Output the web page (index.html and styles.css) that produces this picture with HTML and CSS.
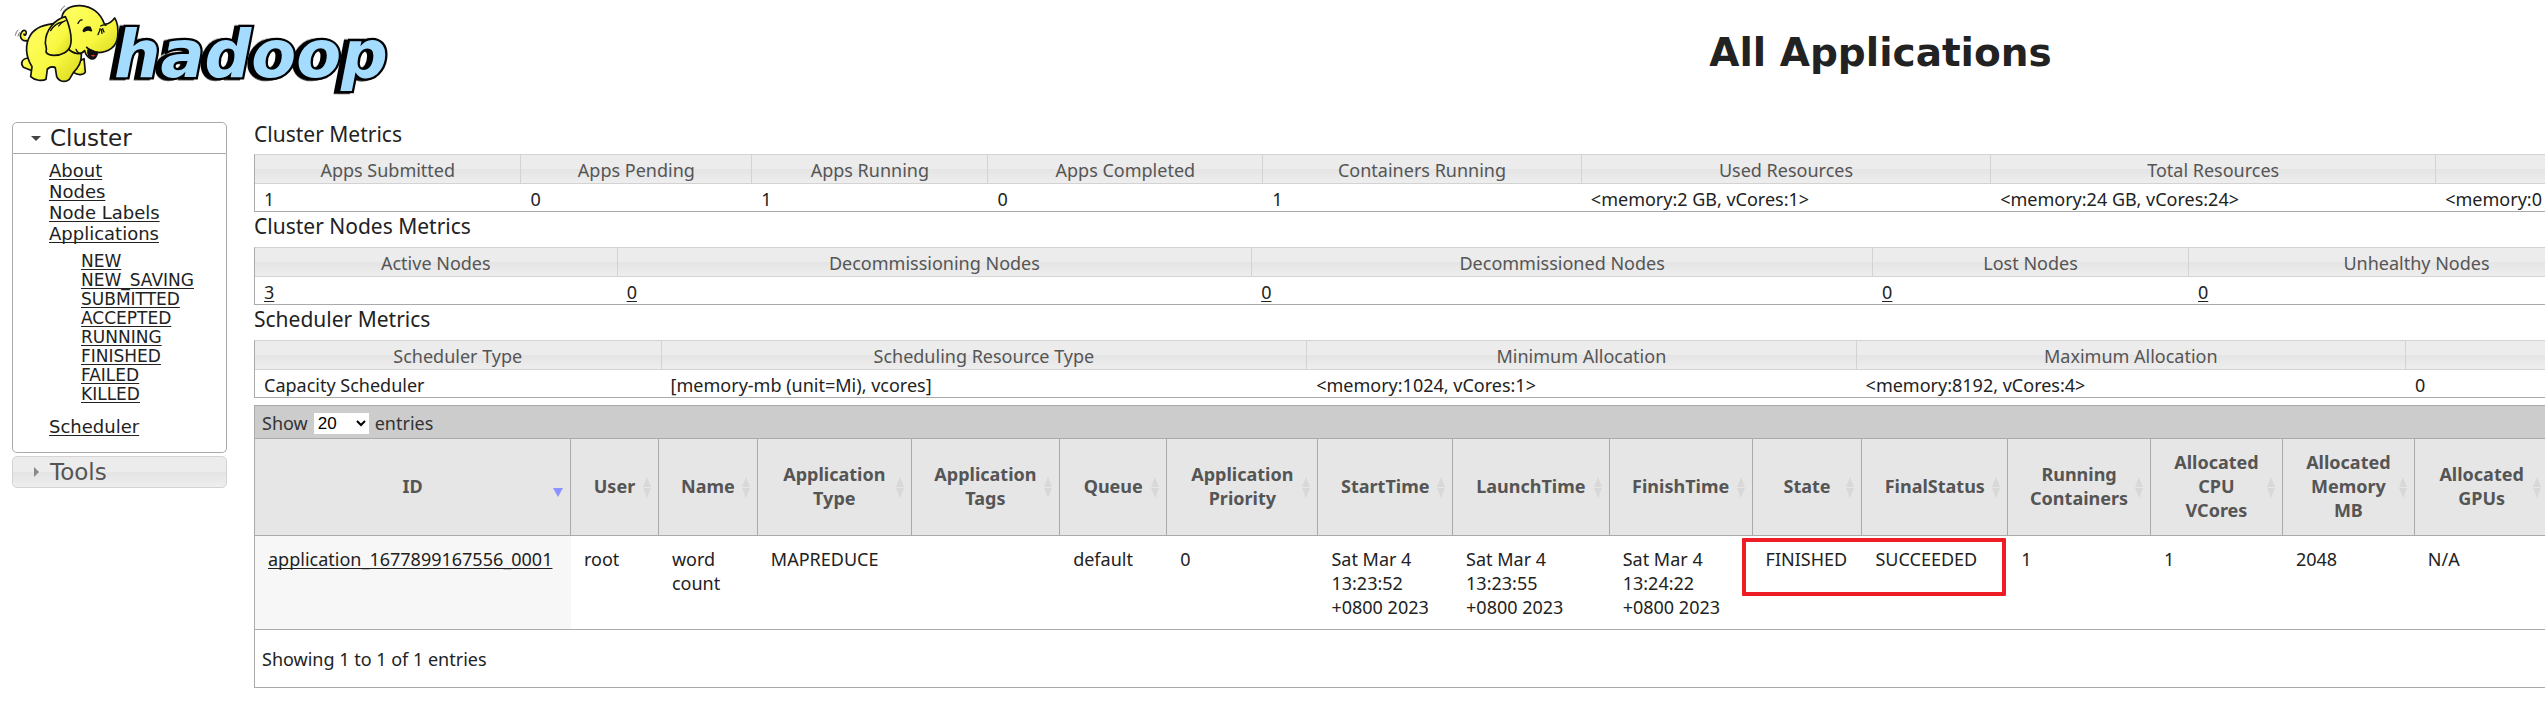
FILE: index.html
```html
<!DOCTYPE html>
<html lang="en">
<head>
<meta charset="utf-8">
<title>All Applications</title>
<link rel="stylesheet" href="styles.css">
</head>
<body>
<header class="header">
  <a class="logo" href="#">
    <svg class="logo-art" viewBox="0 0 1200 330" role="img" aria-label="hadoop">
      <defs>
        <linearGradient id="skin" x1="0" y1="0" x2="1" y2="1">
          <stop offset="0" stop-color="#ffff66"/><stop offset="0.6" stop-color="#f8f840"/><stop offset="1" stop-color="#d6d21c"/>
        </linearGradient>
      </defs>
      <text class="word" x="342" y="230">hadoop</text>
      <g fill="url(#skin)" stroke="#111" stroke-width="5" stroke-linejoin="round" stroke-linecap="round">
        <path d="M82 122C68 126 56 112 64 98C70 86 82 92 78 102C76 108 72 106 72 102"/>
        <path d="M84 174C66 176 60 190 70 202L96 212L110 190Z"/>
        <path d="M224 190L222 218C232 226 252 226 256 216L252 176Z"/>
        <path d="M170 70C140 72 108 80 92 104C74 132 76 168 96 200L92 230C104 242 128 244 138 238L142 208C150 200 158 198 166 204L170 230C178 246 196 248 208 238L220 218C234 204 244 188 244 168L244 150L180 60Z"/>
        <path d="M186 50C190 30 210 16 240 17C276 18 302 40 313 72C326 74 338 62 344 54C352 66 355 90 353 110C350 140 326 158 292 158C290 170 284 180 272 176C262 172 256 160 254 152C240 168 222 160 208 150Z"/>
        <path d="M196 50C166 58 136 88 136 130C138 140 142 146 138 156C146 170 176 168 194 158C218 146 216 110 206 76C202 62 200 56 196 50Z"/>
        <path d="M292 156C278 156 268 150 260 142M264 150C262 162 268 176 278 174C284 172 290 166 291 158Z" fill="#111"/>
        <path d="M272 166Q280 162 286 166Q280 174 272 166Z" fill="#d33" stroke="none"/>
        <path d="M152 92Q164 70 188 66M176 78Q184 66 196 62M234 70Q240 58 246 60M302 78Q312 72 318 76M294 104Q300 92 300 86M306 100L304 88M312 96L308 86M244 162Q232 160 228 148M142 206Q150 198 166 202" fill="none" stroke-width="4"/>
        <path d="M250 92Q256 78 270 82L274 92Q264 86 252 94Z" fill="#111"/>
        <path d="M182 32Q186 22 194 18M192 32Q196 26 202 24M46 106Q48 94 54 90M54 108L58 98" fill="none" stroke="#777" stroke-width="3"/>
      </g>
    </svg>
  </a>
  <h1 class="title">All Applications</h1>
</header>

<div class="page">
  <nav class="sidebar">
    <button class="side-head side-head-open" type="button"><span class="caret caret-down"></span>Cluster</button>
    <div class="side-body">
      <ul class="links">
        <li><a href="#">About</a></li>
        <li><a href="#">Nodes</a></li>
        <li><a href="#">Node Labels</a></li>
        <li><a href="#">Applications</a>
          <ul class="sublinks">
            <li><a href="#">NEW</a></li>
            <li><a href="#">NEW_SAVING</a></li>
            <li><a href="#">SUBMITTED</a></li>
            <li><a href="#">ACCEPTED</a></li>
            <li><a href="#">RUNNING</a></li>
            <li><a href="#">FINISHED</a></li>
            <li><a href="#">FAILED</a></li>
            <li><a href="#">KILLED</a></li>
          </ul>
        </li>
        <li><a href="#">Scheduler</a></li>
      </ul>
    </div>
    <button class="side-head side-head-closed" type="button"><span class="caret caret-right"></span>Tools</button>
  </nav>

  <main class="content">
    <h2 class="section section-first">Cluster Metrics</h2>
    <table class="metrics cluster">
      <thead><tr><th>Apps Submitted</th><th>Apps Pending</th><th>Apps Running</th><th>Apps Completed</th><th>Containers Running</th><th>Used Resources</th><th>Total Resources</th><th></th></tr></thead>
      <tbody><tr><td>1</td><td>0</td><td>1</td><td>0</td><td>1</td><td>&lt;memory:2 GB, vCores:1&gt;</td><td>&lt;memory:24 GB, vCores:24&gt;</td><td>&lt;memory:0</td></tr></tbody>
    </table>
    <h2 class="section">Cluster Nodes Metrics</h2>
    <table class="metrics nodes">
      <thead><tr><th>Active Nodes</th><th>Decommissioning Nodes</th><th>Decommissioned Nodes</th><th>Lost Nodes</th><th>Unhealthy Nodes</th><th></th></tr></thead>
      <tbody><tr><td><a href="#">3</a></td><td><a href="#">0</a></td><td><a href="#">0</a></td><td><a href="#">0</a></td><td><a href="#">0</a></td><td></td></tr></tbody>
    </table>
    <h2 class="section">Scheduler Metrics</h2>
    <table class="metrics scheduler">
      <thead><tr><th>Scheduler Type</th><th>Scheduling Resource Type</th><th>Minimum Allocation</th><th>Maximum Allocation</th><th></th></tr></thead>
      <tbody><tr><td>Capacity Scheduler</td><td>[memory-mb (unit=Mi), vcores]</td><td>&lt;memory:1024, vCores:1&gt;</td><td>&lt;memory:8192, vCores:4&gt;</td><td>0</td></tr></tbody>
    </table>

    <section class="apps">
      <div class="toolbar">
        <label for="length">Show</label>
        <select id="length" class="length"><option>20</option><option>40</option><option>60</option></select>
        <span>entries</span>
      </div>
      <table class="list">
        <thead><tr>
          <th class="sorted">ID</th><th>User</th><th>Name</th><th>Application Type</th><th>Application Tags</th><th>Queue</th><th>Application Priority</th><th>StartTime</th><th>LaunchTime</th><th>FinishTime</th><th>State</th><th>FinalStatus</th><th>Running Containers</th><th>Allocated CPU VCores</th><th>Allocated Memory MB</th><th>Allocated GPUs</th><th></th>
        </tr></thead>
        <tbody><tr>
          <td class="key"><a href="#">application_1677899167556_0001</a></td><td>root</td><td>word count</td><td>MAPREDUCE</td><td></td><td>default</td><td>0</td><td>Sat Mar 4 13:23:52 +0800 2023</td><td>Sat Mar 4 13:23:55 +0800 2023</td><td>Sat Mar 4 13:24:22 +0800 2023</td><td class="state">FINISHED<span class="marker"></span></td><td>SUCCEEDED</td><td>1</td><td>1</td><td>2048</td><td>N/A</td><td></td>
        </tr></tbody>
      </table>
      <div class="info">Showing 1 to 1 of 1 entries</div>
    </section>
  </main>
</div>
</body>
</html>
```
FILE: styles.css
```css
* { box-sizing: border-box; }
body {
  margin: 0;
  background: #fff;
  color: #222;
  font: 18px/24px "Noto Sans", "Open Sans", sans-serif;
  overflow-x: hidden;
}
a { color: #222; text-decoration: underline; text-underline-offset: 2px; text-decoration-skip-ink: none; }

.header { display: flex; height: 122px; }
.logo { flex: none; width: 400px; }
.logo-art { display: block; width: 400px; height: 110px; overflow: visible; }
.word {
  font: italic bold 196px "DejaVu Sans", sans-serif;
  fill: #a3dcff;
  stroke: #000;
  stroke-width: 14px;
  paint-order: stroke;
  filter: drop-shadow(-12px 2px 0 #000);
}
.title {
  flex: 1;
  margin: 0;
  padding: 29px 0 0 816px;
  text-align: center;
  font: bold 39px/48px "DejaVu Sans", sans-serif;
}

.page { display: flex; gap: 27px; padding-left: 12px; }
.sidebar { flex: none; width: 215px; font-family: "DejaVu Sans", sans-serif; }
.side-head {
  display: flex;
  align-items: center;
  width: 100%;
  height: 32px;
  padding: 0 0 0 18px;
  font: 23px/30px "DejaVu Sans", sans-serif;
  text-align: left;
}
.side-head-open { border: 1px solid #aaa; border-radius: 5px 5px 0 0; background: #fff; color: #222; }
.side-head-closed {
  margin-top: 3px;
  border: 1px solid #d3d3d3;
  border-radius: 5px;
  background: linear-gradient(#ececec 50%, #e4e4e4 50%, #eee);
  color: #555;
}
.caret { width: 10px; margin-right: 9px; }
.caret-down { border: 5px solid transparent; border-top-color: #444; border-bottom: 0; }
.caret-right { width: 5px; height: 10px; border: 5px solid transparent; border-left-color: #888; border-right: 0; margin: 0 11px 0 3px; }
.side-body { border: 1px solid #aaa; border-top: 0; border-radius: 0 0 5px 5px; padding: 6px 0 15px 36px; }
.links, .sublinks { list-style: none; margin: 0; padding: 0; }
.links { font-size: 18px; line-height: 21px; }
.sublinks { font-size: 17px; line-height: 19px; padding: 8px 0 12px 32px; }

.content { flex: 1; min-width: 0; overflow: hidden; }
.section { margin: 0; height: 35px; padding-top: 2px; font-size: 21px; line-height: 24px; font-weight: 400; }
.section-first { height: 32px; padding-top: 0; }
.metrics, .list { width: 120%; table-layout: fixed; border-collapse: separate; border-spacing: 0; }
.metrics { border: 1px solid #aaa; border-top-color: #d3d3d3; }
.metrics th {
  height: 29px;
  padding: 2px 0 0;
  border-right: 1px solid #d3d3d3;
  border-bottom: 1px solid #d3d3d3;
  background: linear-gradient(#ececec 50%, #e4e4e4 50%, #eee);
  color: #555;
  font-weight: 400;
}
.metrics td { height: 27px; padding: 2px 0 0 9px; line-height: 24px; white-space: nowrap; }

.cluster th:nth-child(1) { width: 9.7%; }
.cluster th:nth-child(2) { width: 8.4%; }
.cluster th:nth-child(3) { width: 8.6%; }
.cluster th:nth-child(4) { width: 10%; }
.cluster th:nth-child(5) { width: 11.6%; }
.cluster th:nth-child(6) { width: 14.9%; }
.cluster th:nth-child(7) { width: 16.2%; }

.nodes th:nth-child(1) { width: 13.2%; }
.nodes th:nth-child(2) { width: 23.1%; }
.nodes th:nth-child(3) { width: 22.6%; }
.nodes th:nth-child(4) { width: 11.5%; }
.nodes th:nth-child(5) { width: 16.6%; }

.scheduler th:nth-child(1) { width: 14.8%; }
.scheduler th:nth-child(2) { width: 23.5%; }
.scheduler th:nth-child(3) { width: 20%; }
.scheduler th:nth-child(4) { width: 20%; }

.apps { margin-top: 7px; border: 1px solid #aaa; border-right: 0; }
.toolbar { display: flex; align-items: center; gap: 6px; height: 32px; padding: 2px 0 0 7px; background: #ccc; color: #333; }
.length { width: 55px; height: 21px; border: 0; border-radius: 0; background: #fff; color: #000; font: 17px/20px "Liberation Sans", sans-serif; }
.list th {
  position: relative;
  height: 98px;
  padding: 0 20px 2px;
  border: solid #aaa;
  border-width: 1px 1px 1px 0;
  background: #e6e6e6;
  color: #555;
  font-weight: 700;
}
.list th:not(:last-child)::before,
.list th:not(:last-child)::after {
  content: "";
  position: absolute;
  right: 7px;
  border: 4px solid transparent;
}
.list th:not(:last-child)::before { bottom: 48px; border-bottom: 10px solid #d8d8d8; border-top: 0; }
.list th:not(:last-child)::after { top: 49px; border-top: 10px solid #d8d8d8; border-bottom: 0; }
.list th.sorted:not(:last-child)::before { display: none; }
.list th.sorted:not(:last-child)::after { border-width: 9px 5px 0; border-top-color: #8d92ff; }
.list td { height: 93px; padding: 11px 19px 10px 13px; border-bottom: 1px solid #aaa; vertical-align: top; }
.list td.key { background: #f7f7f7; }
.list td.state { position: relative; }
.marker { position: absolute; z-index: 1; top: 2px; left: -11px; width: 264px; height: 58px; border: 4px solid #ee1c24; border-radius: 1px; }

.list th:nth-child(1) { width: 11.5%; }
.list th:nth-child(2) { width: 3.2%; }
.list th:nth-child(3) { width: 3.6%; }
.list th:nth-child(4) { width: 5.6%; }
.list th:nth-child(5) { width: 5.4%; }
.list th:nth-child(6) { width: 3.9%; }
.list th:nth-child(7) { width: 5.5%; }
.list th:nth-child(8) { width: 4.9%; }
.list th:nth-child(9) { width: 5.7%; }
.list th:nth-child(10) { width: 5.2%; }
.list th:nth-child(11) { width: 4%; }
.list th:nth-child(12) { width: 5.3%; }
.list th:nth-child(13) { width: 5.2%; }
.list th:nth-child(14) { width: 4.8%; }
.list th:nth-child(15) { width: 4.8%; }
.list th:nth-child(16) { width: 4.9%; }

.info { padding: 17px 0 16px 7px; }
```
